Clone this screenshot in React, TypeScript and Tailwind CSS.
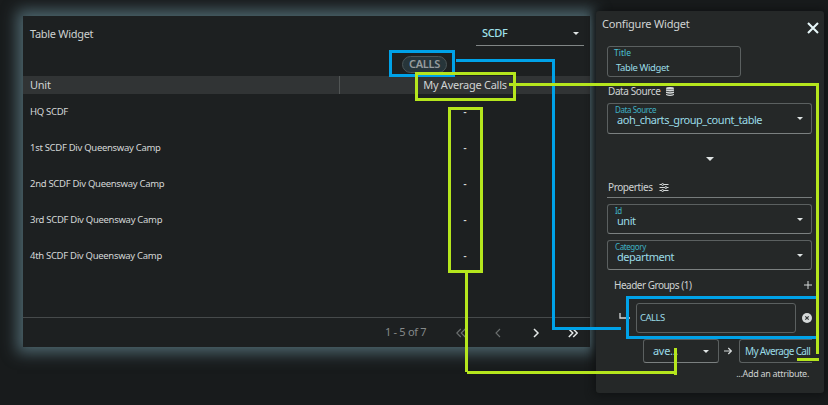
import type { ReactNode } from "react";

const rows = [
  "HQ SCDF",
  "1st SCDF Div Queensway Camp",
  "2nd SCDF Div Queensway Camp",
  "3rd SCDF Div Queensway Camp",
  "4th SCDF Div Queensway Camp",
];

function Caret({ className = "w-[6px]" }: { className?: string }) {
  return (
    <svg viewBox="0 0 8 4" className={`${className} shrink-0`} fill="#dfe4e4">
      <path d="M0 0h8L4 4z" />
    </svg>
  );
}

function SelectField({ label, value, className = "" }: { label: string; value: string; className?: string }) {
  return (
    <div className={`flex items-center justify-between rounded-[3px] border border-[#5b6060] border-b-[#7b8080] pr-[8px] pl-[7px] ${className}`}>
      <div className="self-start pt-px">
        <div className="text-[8px] leading-[9px] tracking-[-0.4px] text-[#3fb0c3]">{label}</div>
        <div className="pl-[2px] text-[11px] leading-[11px] tracking-[-0.46px] text-[#9adbe6]">{value}</div>
      </div>
      <Caret />
    </div>
  );
}

function Chevron({ double = false, left = false, dim = false }: { double?: boolean; left?: boolean; dim?: boolean }) {
  return (
    <svg
      viewBox="0 0 10 10"
      className={`h-[10px] w-[10px] ${left ? "-scale-x-100" : ""}`}
      fill="none"
      stroke={dim ? "#6c7070" : "#e4e8e8"}
      strokeWidth={dim ? 1.1 : 1.5}
    >
      {double ? <path d="M.8 1l4 4-4 4M5.2 1l4 4-4 4" /> : <path d="M3 1l4 4-4 4" />}
    </svg>
  );
}

function TableWidget() {
  return (
    <section className="flex h-[331px] w-[567px] shrink-0 flex-col bg-[#1d2021] shadow-[0_0_14px_6px_#4d656d]">
      <div className="flex h-[60px] flex-col">
        <div className="flex h-[31px] items-start justify-between pr-[6px] pl-[7px]">
          <h1 className="pt-[10px] text-[11px] leading-4 tracking-[-0.3px] text-[#cdd0d0]">Table Widget</h1>
          <div className="flex h-[30px] w-[108px] items-center justify-between border-b border-[#818686] pt-[6px] pr-[5px] pl-[6px] text-[11px] font-medium tracking-[-0.35px] text-[#a0e2ec]">
            <span>SCDF</span>
            <Caret />
          </div>
        </div>
        <div className="flex grow pl-[379px]">
          <span className="mt-[9px] flex h-[17px] w-[45px] items-center justify-center rounded-full border border-[#4b5557] bg-[#27353a] text-[11px] font-semibold tracking-[-0.3px] text-[#969c9e]">
            CALLS
          </span>
        </div>
      </div>
      <div className="grid h-[18px] grid-cols-[317px_250px] bg-[#313435] text-[11px] leading-[18px] tracking-[-0.25px] text-[#d0d3d3]">
        <div className="border-r border-[#515555] pl-[7px]">Unit</div>
        <div className="text-center">My Average Calls</div>
      </div>
      <div className="h-[223px]">
        {rows.map((unit) => (
          <div key={unit} className="grid h-9 grid-cols-[317px_250px] items-center text-[9.5px] text-[#d4d7d7]">
            <div className="pl-[7px] tracking-[-0.3px]">{unit}</div>
            <div className="text-center font-bold">-</div>
          </div>
        ))}
      </div>
      <footer className="flex grow items-center border-t border-[#464a4b] pl-[362px] text-[11px] text-[#858989]">
        <span className="w-[71px] tracking-[-0.3px]">1 - 5 of 7</span>
        <div className="flex w-[122px] items-center justify-between">
          <Chevron double left dim />
          <Chevron left dim />
          <Chevron />
          <Chevron double />
        </div>
      </footer>
    </section>
  );
}

function SectionLabel({ children }: { children: ReactNode }) {
  return (
    <div className="flex h-[14px] items-center gap-[6px] pl-px text-[10px] tracking-[-0.4px] text-[#cfd2d2]">{children}</div>
  );
}

function ConfigurePanel() {
  return (
    <aside className="mt-[-5px] ml-[6px] flex h-[382px] w-[228px] shrink-0 flex-col rounded-[3px] bg-[#252828] pr-[12px] pl-[11px] shadow-[0_0_8px_2px_#101213]">
      <div className="ml-[-5px] flex h-[35px] items-start justify-between">
        <h2 className="pt-[5px] text-[11px] leading-4 tracking-[-0.2px] text-[#d0d3d3]">Configure Widget</h2>
        <svg viewBox="0 0 12 12" className="mt-[11px] mr-[-7px] h-3 w-3" stroke="#e6f6f8" strokeWidth="2.1">
          <path d="M1 1l10 10M11 1L1 11" />
        </svg>
      </div>
      <div className="h-[31px] w-[134px] rounded-[3px] border border-[#5b6060] pl-[6px]">
        <div className="text-[8.5px] leading-[11px] text-[#4cc0d3]">Title</div>
        <div className="pt-[3px] pl-[2px] text-[9.5px] leading-[13px] tracking-[-0.4px] text-[#9adbe6]">Table Widget</div>
      </div>
      <div className="pt-[7px]">
        <SectionLabel>
          <span>Data Source</span>
          <svg viewBox="0 0 8 9" className="h-[9px] w-2" fill="#d5d9d9">
            <ellipse cx="4" cy="1.3" rx="4" ry="1.3" />
            <path d="M0 2.2q4 1.5 8 0v1.5q-4 1.5-8 0zM0 4.6q4 1.5 8 0v1.4q-4 1.5-8 0zM0 6.9q4 1.5 8 0v1q-4 2-8 0z" />
          </svg>
        </SectionLabel>
      </div>
      <SelectField label="Data Source" value="aoh_charts_group_count_table" className="mt-[5px] h-[31px]" />
      <div className="flex h-[46px] items-center justify-center pt-[3px]">
        <Caret className="w-2" />
      </div>
      <div className="flex h-[18px] items-start border-b border-[#777c7c]">
        <SectionLabel>
          <span>Properties</span>
          <svg viewBox="0 0 10 9" className="h-[9px] w-[10px]" stroke="#d5d9d9" fill="#252828">
            <path d="M.5 1.5h9M.5 4.5h9M.5 7.5h9" />
            <circle cx="3.6" cy="1.5" r="1" />
            <circle cx="6.8" cy="4.5" r="1" />
            <circle cx="3.6" cy="7.5" r="1" />
          </svg>
        </SectionLabel>
      </div>
      <SelectField label="Id" value="unit" className="mt-[6px] h-[30px]" />
      <SelectField label="Category" value="department" className="mt-[6px] h-[30px]" />
      <div className="flex h-[33px] items-center justify-between pl-[7px] text-[10px] tracking-[-0.5px] text-[#cfd2d2]">
        <span className="pb-[3px]">Header Groups (1)</span>
        <svg viewBox="0 0 8 8" className="mb-[3px] h-2 w-2" stroke="#d5d9d9">
          <path d="M0 4h8M4 0v8" />
        </svg>
      </div>
      <div className="flex h-[30px] items-center pl-[12px]">
        <svg viewBox="0 0 11 7" className="mb-[4px] h-[7px] w-[11px]" fill="none" stroke="#d5d9d9" strokeWidth="1.3">
          <path d="M1 0v5h10" />
        </svg>
        <div className="ml-[6px] flex h-[30px] w-[160px] shrink-0 items-center rounded-[3px] border border-[#5b6060] pl-[3px] text-[9.5px] tracking-[-0.5px] text-[#9adbe6]">
          CALLS
        </div>
        <svg viewBox="0 0 10 10" className="ml-[6px] h-[10px] w-[10px] shrink-0">
          <circle cx="5" cy="5" r="5" fill="#d5d9d9" />
          <path d="M3.3 3.3l3.4 3.4M6.7 3.3L3.3 6.7" stroke="#333737" strokeWidth="1.2" />
        </svg>
      </div>
      <div className="mt-[6px] flex h-[24px] items-center pl-[36px] text-[#9adbe6]">
        <div className="flex h-full w-[76px] shrink-0 items-center justify-between rounded-[3px] border border-[#5b6060] border-b-[#7b8080] pr-[9px] pl-[9px] text-[11px] tracking-[-0.3px]">
          <span>ave...</span>
          <Caret />
        </div>
        <svg viewBox="0 0 8 8" className="ml-[5px] h-2 w-2 shrink-0" fill="none" stroke="#d5d9d9" strokeWidth="1.2">
          <path d="M0 4h7.2M4.3 1l3 3-3 3" />
        </svg>
        <div className="ml-[7px] flex h-full w-[73px] shrink-0 items-center rounded-l-[3px] border border-r-0 border-[#5b6060] pl-[5px] text-[10px] tracking-[-0.65px] whitespace-nowrap">
          My Average Call
        </div>
      </div>
      <div className="pt-[4px] pr-[3px] text-right text-[9px] leading-[13px] tracking-[-0.3px] text-[#cfd2d2]">...Add an attribute.</div>
    </aside>
  );
}

function Connectors() {
  return (
    <svg className="pointer-events-none absolute inset-0" width="828" height="405" fill="none" strokeWidth="3">
      <g stroke="#00a2e8">
        <path d="M390.5 51.5h63v24h-63zM456 60.5h97.500v268H621M816 297.500H627.500v40H816" />
      </g>
      <g stroke="#b5e61d">
        <path d="M416.500 73.500h98v26h-98zM449.500 108.500h32v163h-32zM509 84.500h308.500V354M797 359.500h22" />
        <path d="M466.500 273v99M467 372.500h208.500M675.500 348v27" />
      </g>
    </svg>
  );
}

export default function App() {
  return (
    <main className="relative flex h-[405px] w-[828px] items-start overflow-hidden bg-[#181b1c] pt-[16px] pl-[23px] font-['Noto_Sans',sans-serif]">
      <TableWidget />
      <ConfigurePanel />
      <Connectors />
    </main>
  );
}
